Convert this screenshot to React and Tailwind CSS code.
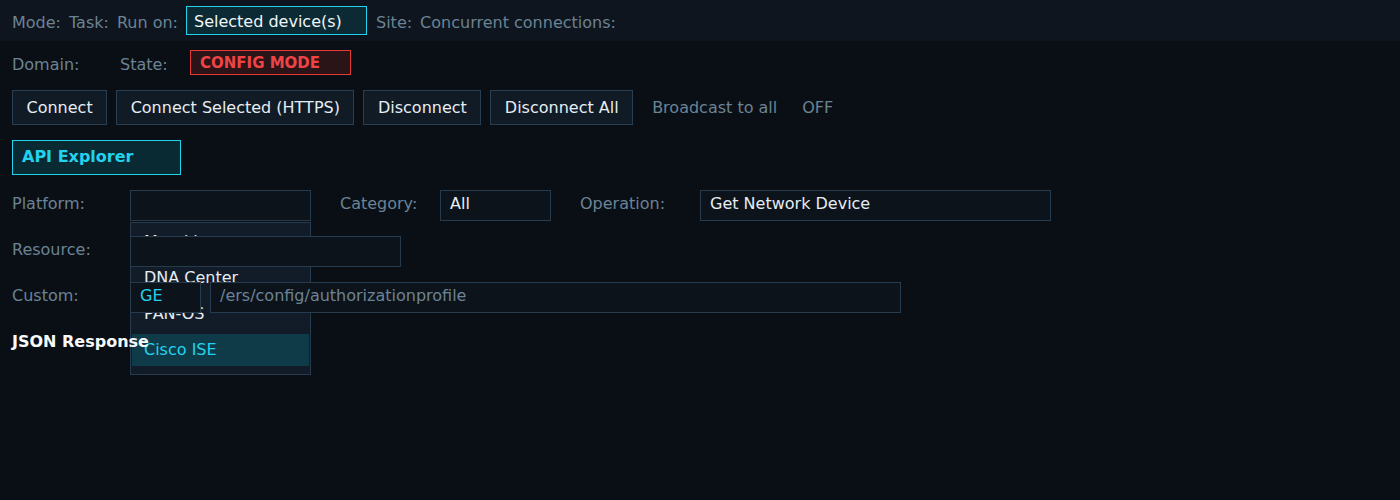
import React from 'react';

const font = { fontFamily: '"DejaVu Sans", "Liberation Sans", sans-serif' };

const Label = ({ children, className = '' }) => (
  <span className={`text-[#6b8394] ${className}`}>{children}</span>
);

const Button = ({ children }) => (
  <button className="h-[35px] px-[13.5px] bg-[#111b26] border border-[#2a3e51] text-[#e6edf3] leading-none">
    {children}
  </button>
);

const Field = ({ children, className = '', tone = 'text-[#e6edf3]' }) => (
  <div className={`h-[31px] flex items-center px-[9px] pb-1 bg-[#0d131b] border border-[#263b4e] ${tone} ${className}`}>
    {children}
  </div>
);

const platforms = ['Meraki', 'DNA Center', 'PAN-OS', 'Cisco ISE'];

export default function App() {
  return (
    <div className="w-[1400px] h-[500px] bg-[#0a0f16] text-base overflow-hidden" style={font}>
      {/* top bar */}
      <div className="h-[41px] bg-[#0e151e] flex items-center gap-2 px-3">
        <Label className="pt-1">Mode:</Label>
        <Label className="pt-1">Task:</Label>
        <Label className="pt-1">Run on:</Label>
        <div className="h-[29px] w-[181px] flex items-center px-[7px] pt-[2px] bg-[#0b2a33] border border-[#22d3ee] text-[#f1f5f9]">
          Selected device(s)
        </div>
        <Label className="ml-px pt-1">Site:</Label>
        <Label className="pt-1">Concurrent connections:</Label>
      </div>

      <div className="px-3">
        {/* state row */}
        <div className="mt-[9px] h-[25px] flex items-center">
          <Label className="w-[108px] pt-1">Domain:</Label>
          <Label className="w-[70px] pt-1">State:</Label>
          <div className="h-[25px] w-[161px] flex items-center px-[9px] pt-[2px] bg-[#2a1418] border border-[#e53935] text-[#ef4444] text-[15px] font-bold">
            CONFIG MODE
          </div>
        </div>

        {/* actions */}
        <div className="mt-[15px] flex items-center gap-[9px]">
          <Button>Connect</Button>
          <Button>Connect Selected (HTTPS)</Button>
          <Button>Disconnect</Button>
          <Button>Disconnect All</Button>
          <Label className="ml-[10px]">Broadcast to all</Label>
          <Label className="ml-4">OFF</Label>
        </div>

        {/* tab */}
        <div className="mt-[15px] h-[35px] w-[169px] flex items-center px-[9px] pb-[2px] bg-[#0a2a33] border border-[#22d3ee] text-[#22d3ee] font-bold">
          API Explorer
        </div>

        {/* platform row */}
        <div className="relative mt-[15px] h-[31px] flex items-center">
          <Label className="w-[118px] pb-1">Platform:</Label>
          <Field className="w-[181px]" />
          <Label className="ml-[29px] w-[100px] pb-1">Category:</Label>
          <Field className="w-[111px]">All</Field>
          <Label className="ml-[29px] w-[120px] pb-1">Operation:</Label>
          <Field className="w-[351px]">Get Network Device</Field>

          <div className="absolute left-[118px] top-[32px] w-[181px] h-[153px] bg-[#121c28] border border-[#263b4e] px-px pt-[3px] flex flex-col gap-1">
            {platforms.map((p) => (
              <div
                key={p}
                className={`h-8 flex items-center px-3 ${p === 'Cisco ISE' ? 'bg-[#0f3b48] text-[#22d3ee]' : 'text-[#e6edf3]'}`}
              >
                {p}
              </div>
            ))}
          </div>
        </div>

        {/* resource row */}
        <div className="relative mt-[15px] h-[31px] flex items-center">
          <Label className="w-[118px] pb-1">Resource:</Label>
          <Field className="w-[271px]" />
        </div>

        {/* custom row */}
        <div className="relative mt-[15px] h-[31px] flex items-center">
          <Label className="w-[118px] pb-1">Custom:</Label>
          <Field className="w-[71px]" tone="text-[#22d3ee]">GE</Field>
          <Field className="ml-[9px] w-[691px]" tone="text-[#6b8394]">/ers/config/authorizationprofile</Field>
        </div>

        <div className="relative mt-[17px] font-bold text-[#f8fafc]">JSON Response</div>
      </div>
    </div>
  );
}
